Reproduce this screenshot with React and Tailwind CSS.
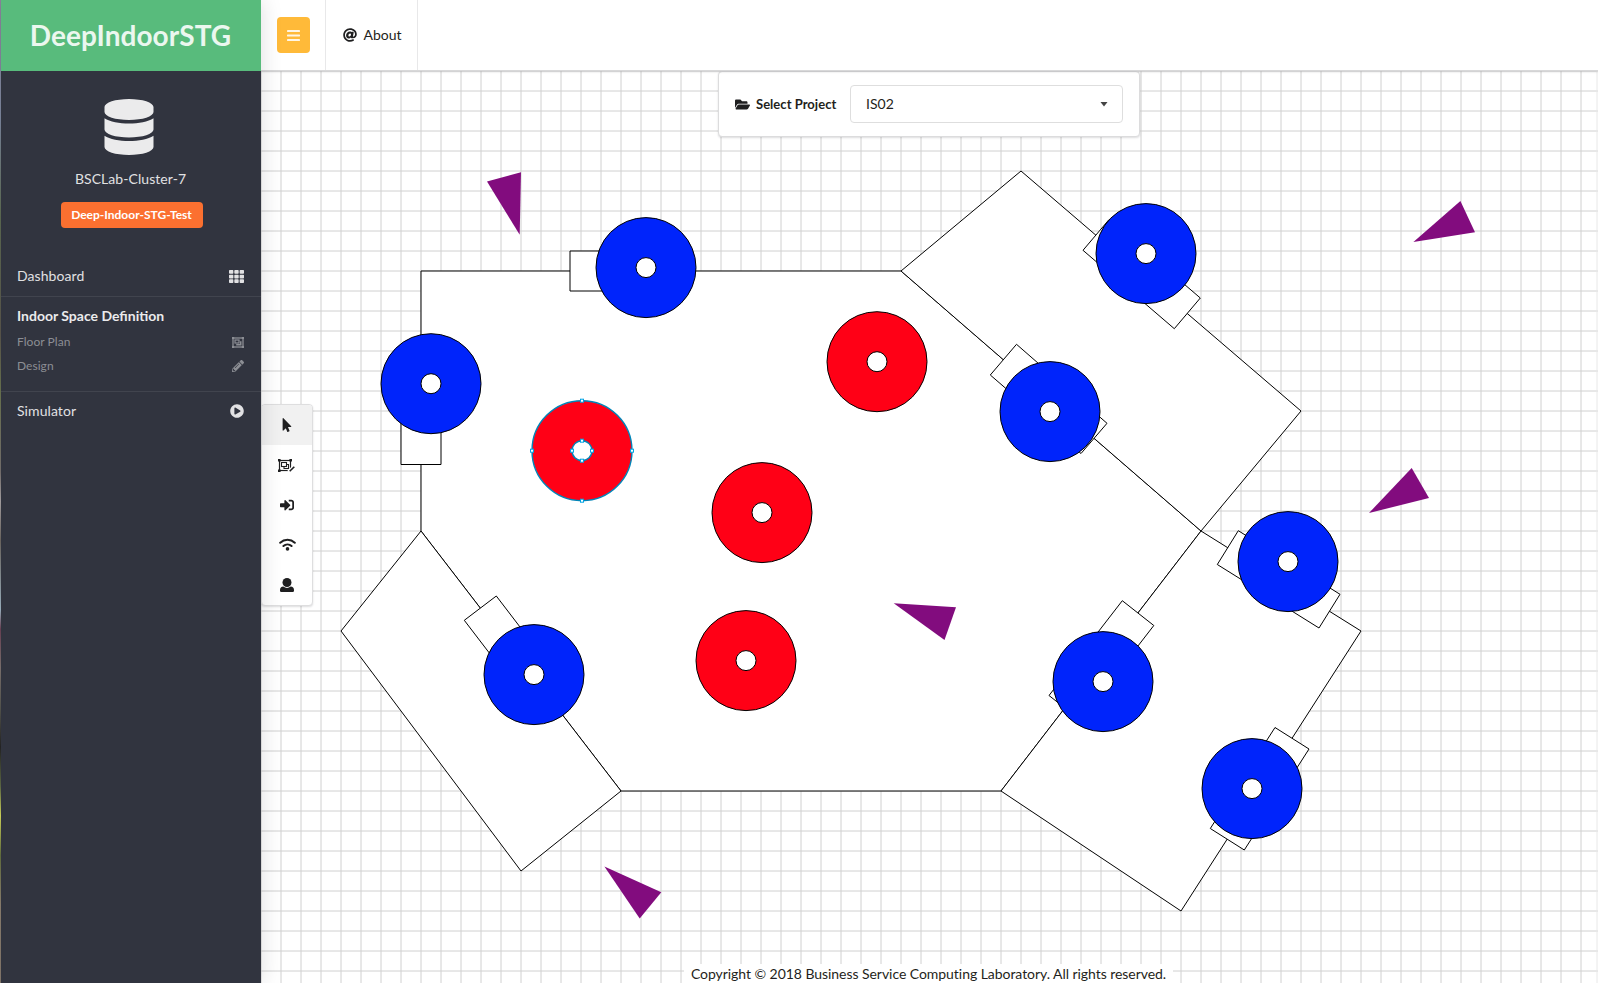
import React from "react";
import {
  FaAt, FaDatabase, FaFolderOpen, FaMousePointer, FaPencilAlt,
  FaPlayCircle, FaSignInAlt, FaTh,
} from "react-icons/fa";

const rooms = [
  "421,271 901,271 1201,531 1001,791 621,791 421,531",
  "901,271 1021,171 1301,411 1201,531",
  "421,531 621,791 521,871 341,631",
  "1201,531 1361,631 1181,911 1001,791",
];

const doors = [
  "570,251 690,251 690,291 570,291",
  "401,344.5 441,344.5 441,464.5 401,464.5",
  "496.3,596 464.3,620.3 537.2,715.6 569.2,691.3",
  "1083,250.3 1109,219.6 1200.3,298 1174.3,328.7",
  "990.3,375 1016.5,344.3 1107,423.3 1081,453.5",
  "1238.3,530.7 1217.3,564.5 1319,628 1340,594.3",
  "1122.3,600.7 1153.8,625.5 1080.5,720.3 1049,695.5",
  "1275,727.5 1309,749 1244.3,850 1210.3,828.5",
];

const routers = [
  [646, 267.6], [431, 383.7], [534, 674.6], [1146, 253.6],
  [1050, 411.6], [1288, 561.6], [1103, 681.6], [1252, 788.6],
];

const targets = [[762, 512.6], [746, 660.6], [877, 361.7]];

const arrows = [
  "487,181.5 521,172.3 519.7,234.7",
  "1460.4,201 1475,232.3 1413.4,242",
  "1411.7,468 1429,498 1369,513",
  "893.7,603.2 956,607.3 944.5,640",
  "604.4,866.5 661.3,892.3 639.7,918.5",
];

function Ring({ cx, cy, fill, stroke = "#000", width = 1 }) {
  return (
    <g stroke={stroke} strokeWidth={width}>
      <circle cx={cx} cy={cy} r="50" fill={fill} />
      <circle cx={cx} cy={cy} r="10" fill="#fff" />
    </g>
  );
}

function SelectedRing({ cx, cy }) {
  const handles = [50, 10].flatMap((r) => [[cx - r, cy], [cx + r, cy], [cx, cy - r], [cx, cy + r]]);
  return (
    <g>
      <Ring cx={cx} cy={cy} fill="#ff0016" stroke="#0085b8" width={1.4} />
      {handles.map(([x, y], i) => (
        <rect key={i} x={x - 1.5} y={y - 1.5} width="3" height="3" fill="#fff" stroke="#00a4e4" />
      ))}
    </g>
  );
}

function FloorPlan() {
  return (
    <svg className="block h-full w-full" viewBox="261 71 1337 912">
      <g stroke="#d0d0d0">
        {Array.from({ length: 67 }, (_, i) => (
          <line key={i} x1={261 + i * 20} x2={261 + i * 20} y1="71" y2="983" />
        ))}
        {Array.from({ length: 46 }, (_, i) => (
          <line key={i} x1="261" x2="1598" y1={71 + i * 20} y2={71 + i * 20} />
        ))}
      </g>
      <path d="M1597 71V983" stroke="#e8e8e8" />
      <g fill="#fff" stroke="#000">
        {rooms.map((p) => <polygon key={p} points={p} />)}
        {doors.map((p) => <polygon key={p} points={p} />)}
      </g>
      {routers.map(([x, y]) => <Ring key={x} cx={x} cy={y} fill="#0024fb" />)}
      {targets.map(([x, y]) => <Ring key={x} cx={x} cy={y} fill="#ff0016" />)}
      <SelectedRing cx={582} cy={450.7} />
      {arrows.map((p) => <polygon key={p} points={p} fill="#820c7e" />)}
    </svg>
  );
}

function MenuIcon() {
  return (
    <svg width="13" height="11" viewBox="0 0 13 11" fill="currentColor">
      <rect width="13" height="2" rx=".4" />
      <rect y="4.500" width="13" height="2" rx=".4" />
      <rect y="9" width="13" height="2" rx=".4" />
    </svg>
  );
}

function UserIcon() {
  return (
    <svg width="14" height="14" viewBox="0 0 14 14" fill="currentColor">
      <circle cx="7" cy="4.5" r="4.5" />
      <path d="M0 12C0 9.800 1.300 8.700 3.300 8.600a6 6 0 0 0 7.400 0C12.700 8.700 14 9.800 14 12v.7A1.300 1.300 0 0 1 12.700 14H1.300A1.300 1.300 0 0 1 0 12.700z" />
    </svg>
  );
}

function WifiIcon() {
  return (
    <svg className="mb-[2px]" width="17" height="13" viewBox="0 0 17 13" fill="none" stroke="currentColor" strokeLinecap="round">
      <path d="M1.200 4.700A10.800 10.800 0 0 1 15.800 4.700" strokeWidth="2" />
      <path d="M4.400 8A6 6 0 0 1 12.600 8" strokeWidth="2" />
      <circle cx="8.500" cy="10.900" r="1.800" fill="currentColor" stroke="none" />
    </svg>
  );
}

function FloorPlanIcon() {
  return (
    <svg width="12" height="11" viewBox="0 0 12 11" fill="none" stroke="currentColor">
      <rect x="1" y="1" width="10" height="9" strokeWidth="1.300" />
      <path d="M0 0h2.200v2H0zM9.800 0H12v2H9.800zM0 9h2.200v2H0zM9.800 9H12v2H9.800z" fill="currentColor" stroke="none" />
      <rect x="3" y="3" width="4" height="3" strokeWidth="1.200" />
      <path d="M8 4.200H9.500V8.500H4.200V7H8z" fill="currentColor" stroke="none" />
    </svg>
  );
}

function EditGroupIcon() {
  return (
    <svg className="-ml-[2px]" width="17" height="13" viewBox="0 0 17 13" fill="none" stroke="currentColor">
      <rect x="1.500" y="1.500" width="11" height="10" strokeWidth="1.200" />
      <path d="M0 0h2.600v2.600H0zM11.400 0H14v2.600h-2.600zM0 10.400h2.600V13H0z" fill="currentColor" stroke="none" />
      <rect x="3.500" y="3.500" width="5" height="4" strokeWidth="1.100" />
      <path d="M8.500 5.500H10.500V9.500H6V7.500" strokeWidth="1.100" />
      <path d="M10.500 13L16.500 7" stroke="#fff" strokeWidth="3.200" />
      <path d="M11.700 12.300L16.300 7.700" strokeWidth="1.600" />
    </svg>
  );
}

function Sidebar() {
  return (
    <aside className="relative z-20 flex w-[260px] shrink-0 flex-col bg-[#31343f] text-[#e1e1e3] shadow-[0_0_20px_rgba(34,36,38,0.15)]">
      <div className="flex h-[71px] items-center justify-center bg-[#58bb7c] pr-px pb-[2px] text-[28px] font-bold tracking-[0.06px] text-[#ebf7ef]">
        DeepIndoorSTG
      </div>
      <div className="flex h-[185px] flex-col items-center pt-[28px]">
        <FaDatabase className="mr-1 h-[56px] w-[50px] text-[#ebebec]" />
        <div className="mt-[14px] mr-px text-sm leading-5 tracking-[0.06px]">BSCLab-Cluster-7</div>
        <div className="mt-[13px] ml-[2px] flex h-[26px] w-[142px] items-center justify-center rounded-[4px] bg-[#fb7030] text-xs font-bold text-white">
          <span className="-ml-px">Deep-Indoor-STG-Test</span>
        </div>
      </div>
      <div className="flex h-[41px] items-center justify-between border-b border-[#41444e] pr-[17px] pl-4 text-sm tracking-[0.08px]">
        Dashboard <FaTh size={15} />
      </div>
      <div className="h-[95px] border-b border-[#41444e] pr-[17px] pl-4 pt-[9px]">
        <div className="text-sm leading-5 font-bold text-[#ebebec]">Indoor Space Definition</div>
        <div className="mt-1 flex h-6 items-center justify-between text-xs tracking-[0.04px] text-[#8c8e94]">
          Floor Plan <FloorPlanIcon />
        </div>
        <div className="flex h-6 items-center justify-between text-xs tracking-[0.04px] text-[#8c8e94]">
          Design <FaPencilAlt size={12} />
        </div>
      </div>
      <div className="flex h-[38px] items-center justify-between pr-[17px] pl-4 text-sm tracking-[0.08px]">
        Simulator <FaPlayCircle size={14} />
      </div>
    </aside>
  );
}

const tools = [
  <FaMousePointer size={14} />,
  <EditGroupIcon />,
  <FaSignInAlt size={14} />,
  <WifiIcon />,
  <UserIcon />,
];

export default function App() {
  return (
    <div className="flex h-[983px] w-[1598px] overflow-hidden bg-white font-['Lato',sans-serif] text-[#1f1f20]">
      <div className="w-px shrink-0 bg-[linear-gradient(#8b849d_0%,#7d88a0_12%,#5d6b52_22%,#5a564c_34%,#6b7550_40%,#77716f_48%,#a9a4a6_51%,#6e6862_55%,#9fb5c4_62%,#6b4256_64%,#7d7370_68%,#56564f_72%,#242424_76%,#5f6b46_80%,#d5da5c_83%,#64703f_87%,#8d8070_92%,#84786c_100%)]" />
      <Sidebar />
      <div className="flex w-[1337px] flex-col">
        <header className="relative z-10 flex h-[71px] items-stretch border-b border-[#d8d8d9] bg-white text-sm shadow-[0_1px_2px_rgba(34,36,38,0.15)]">
          <div className="flex w-[65px] items-center border-r border-[#e8e8e9] pl-4">
            <button className="flex h-[36px] w-[33px] items-center justify-center rounded-[4px] bg-[#ffba39] text-[#fff6e5]">
              <MenuIcon />
            </button>
          </div>
          <div className="flex w-[92px] items-center gap-[6.5px] border-r border-[#e8e8e9] pl-[17px]">
            <FaAt size={14} /> About
          </div>
        </header>
        <main className="relative h-[912px]">
          <FloorPlan />
          <div className="absolute top-0 left-[457px] flex h-[66px] w-[422px] items-center rounded-[4px] border border-[#dcdcdd] bg-white pl-4 shadow-[0_1px_2px_rgba(34,36,38,0.15)]">
            <FaFolderOpen size={15} />
            <span className="ml-[6px] w-[94px] pt-px text-[13px] font-bold tracking-[0.03px]">Select Project</span>
            <div className="flex h-[38px] w-[273px] items-center justify-between rounded-[4px] border border-[#dedede] pr-[14px] pl-[15px] text-sm">
              IS02
              <svg width="8" height="5" viewBox="0 0 8 5"><path d="M.5 0h7L4 4.400z" fill="#444" /></svg>
            </div>
          </div>
          <div className="absolute top-[333px] left-0 w-[52px] overflow-hidden rounded-[4px] border border-[#dededf] bg-white shadow-[0_1px_2px_rgba(34,36,38,0.15)]">
            {tools.map((tool, i) => (
              <div key={i} className="flex h-10 items-center justify-center first:bg-[#f1f1f1]">{tool}</div>
            ))}
          </div>
          <footer className="absolute bottom-0 left-[423px] flex h-[19px] w-[489px] items-center justify-center bg-white text-sm tracking-[-0.05px] whitespace-nowrap">
            Copyright © 2018 Business Service Computing Laboratory. All rights reserved.
          </footer>
        </main>
      </div>
    </div>
  );
}
